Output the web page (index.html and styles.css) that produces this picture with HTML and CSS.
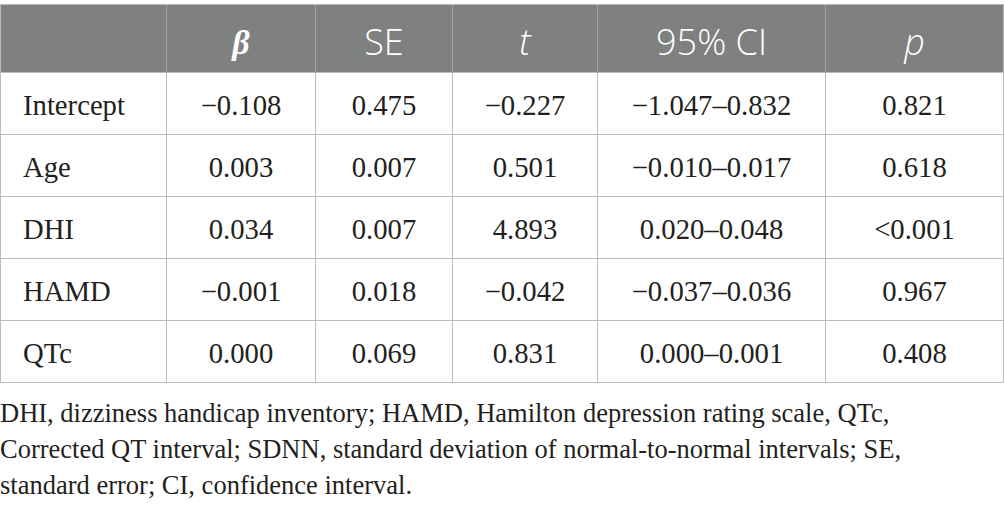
FILE: index.html
```html
<!DOCTYPE html>
<html>
<head>
<meta charset="utf-8">
<link rel="stylesheet" href="styles.css">
</head>
<body>
<div class="wrap">
<table class="stats">
  <colgroup>
    <col class="c0"><col class="c1"><col class="c2"><col class="c3"><col class="c4"><col class="c5">
  </colgroup>
  <thead>
    <tr>
      <th></th>
      <th><span class="greek">β</span></th>
      <th>SE</th>
      <th><i>t</i></th>
      <th>95% CI</th>
      <th><i>p</i></th>
    </tr>
  </thead>
  <tbody>
    <tr><td class="lbl">Intercept</td><td>−0.108</td><td>0.475</td><td>−0.227</td><td>−1.047–0.832</td><td>0.821</td></tr>
    <tr><td class="lbl">Age</td><td>0.003</td><td>0.007</td><td>0.501</td><td>−0.010–0.017</td><td>0.618</td></tr>
    <tr><td class="lbl">DHI</td><td>0.034</td><td>0.007</td><td>4.893</td><td>0.020–0.048</td><td>&lt;0.001</td></tr>
    <tr><td class="lbl">HAMD</td><td>−0.001</td><td>0.018</td><td>−0.042</td><td>−0.037–0.036</td><td>0.967</td></tr>
    <tr><td class="lbl">QTc</td><td>0.000</td><td>0.069</td><td>0.831</td><td>0.000–0.001</td><td>0.408</td></tr>
  </tbody>
</table>
<p class="note">DHI, dizziness handicap inventory; HAMD, Hamilton depression rating scale, QTc, Corrected QT interval; SDNN, standard deviation of normal-to-normal intervals; SE, standard error; CI, confidence interval.</p>
</div>
</body>
</html>
```

FILE: styles.css
```css
html, body {
  margin: 0;
  padding: 0;
  background: #ffffff;
}
.wrap {
  padding-top: 4px;
  width: 1004px;
}
.stats {
  width: 1003px;
  border-collapse: collapse;
  table-layout: fixed;
  font-family: "Liberation Serif", "Times New Roman", serif;
  color: #231f20;
}
.c0 { width: 166px; }
.c1 { width: 149px; }
.c2 { width: 137px; }
.c3 { width: 145px; }
.c4 { width: 228px; }
.c5 { width: 178px; }
.stats th {
  background: #7f8080;
  color: #ffffff;
  font-family: "Open Sans", Lato, sans-serif;
  font-weight: 300;
  font-size: 36px;
  line-height: 40px;
  height: 68px;
  padding: 6px 0 0 0;
  box-sizing: border-box;
  border-left: 1px solid #a3a3a3;
  border-top: 1px solid #b8b8b8;
  text-align: center;
  vertical-align: middle;
}
.stats th:first-child { border-left: 1px solid #b8b8b8; }
.stats th:last-child { border-right: 1px solid #b8b8b8; }
.stats th .greek {
  font-family: "Liberation Serif", serif;
  font-style: italic;
  font-weight: 700;
  font-size: 34px;
}
.stats td {
  height: 62px;
  box-sizing: border-box;
  border: 1px solid #bcbcbc;
  text-align: center;
  vertical-align: middle;
  font-size: 28.7px;
  padding: 4px 0 0 0;
}
.stats td.lbl {
  text-align: left;
  padding-left: 22px;
}
.note {
  margin: 12px 0 0 0;
  font-family: "Liberation Serif", "Times New Roman", serif;
  font-size: 26.5px;
  line-height: 36px;
  color: #231f20;
  width: 935px;
}
```
